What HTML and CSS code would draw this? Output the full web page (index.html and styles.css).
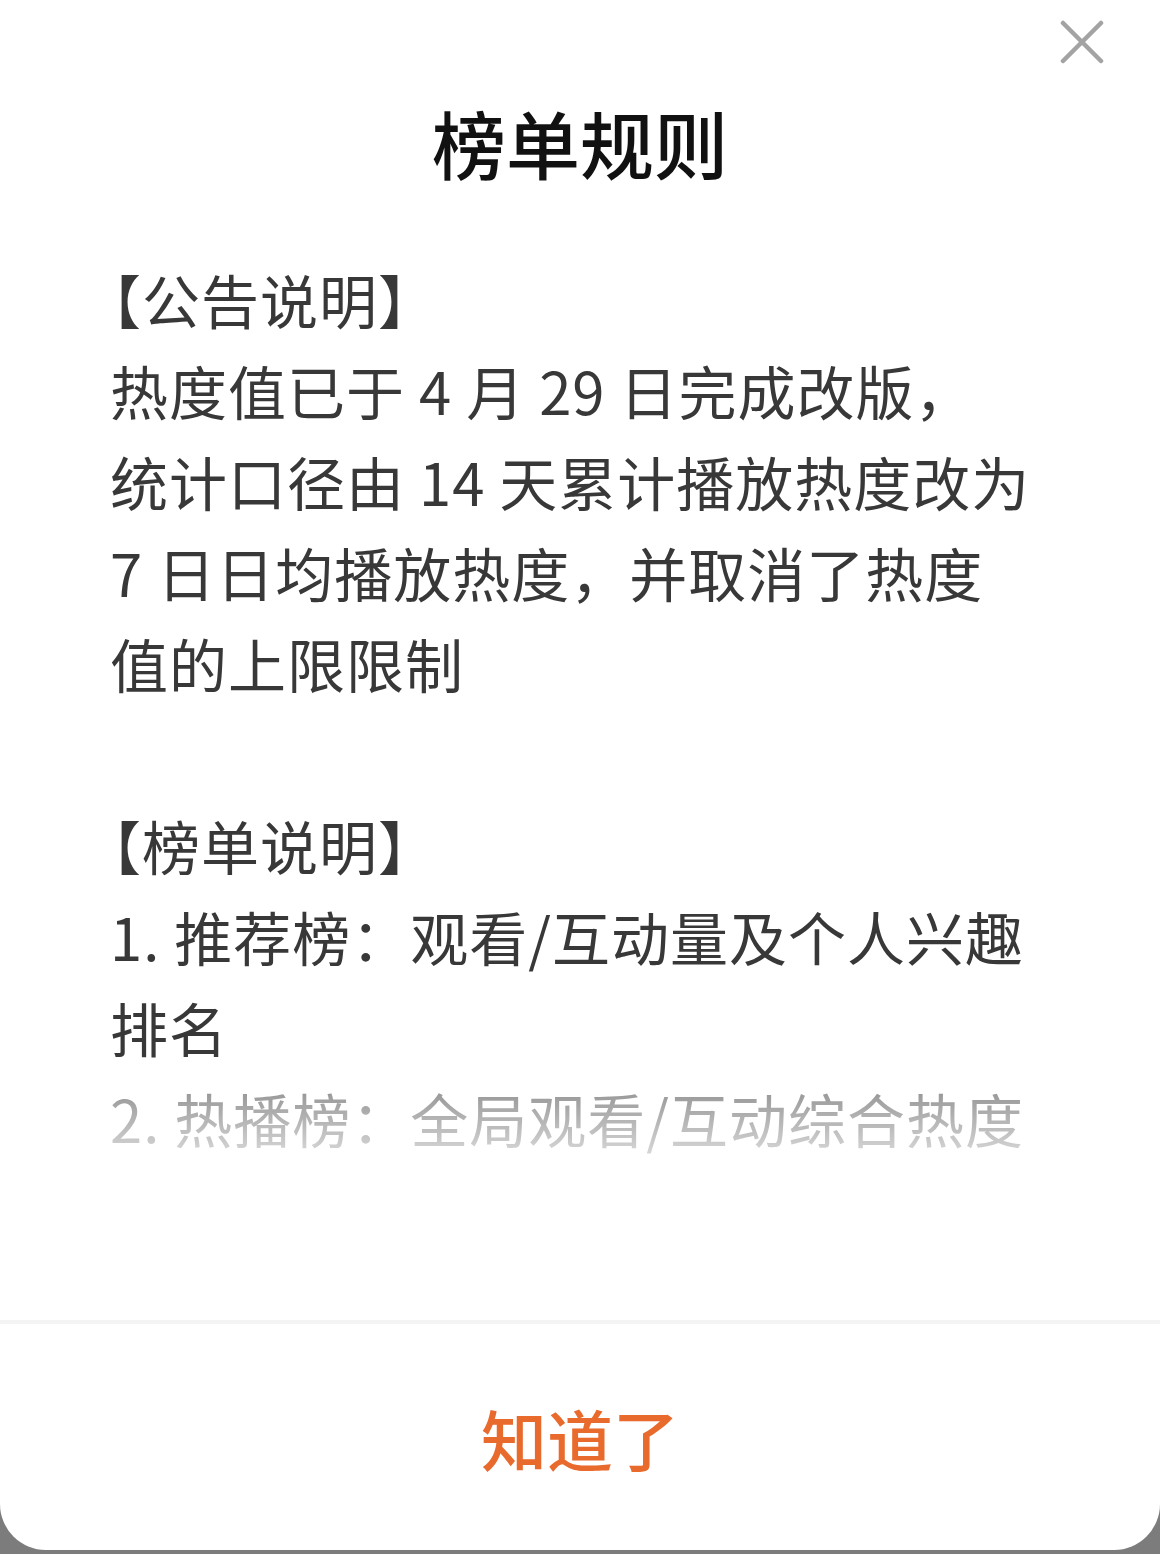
FILE: index.html
```html
<!DOCTYPE html>
<html lang="zh-CN">
<head>
<meta charset="utf-8">
<title>榜单规则</title>
<link rel="stylesheet" href="styles.css">
</head>
<body>
<div class="modal">
  <button class="close" aria-label="关闭">
    <svg viewBox="0 0 44 44" width="44" height="44"><path d="M3 3 L41 41 M41 3 L3 41" stroke="#a3a3a3" stroke-width="4.5" stroke-linecap="round" fill="none"/></svg>
  </button>
  <h1 class="title">榜单规则</h1>
  <div class="content">
    <p class="para"><span class="lead">【公告说明】</span><br>热度值已于 4 月 29 日完成改版，<br>统计口径由 14 天累计播放热度改为<br>7 日日均播放热度，并取消了热度<br>值的上限限制</p>
    <p class="para"><span class="lead">【榜单说明】</span><br>1. 推荐榜：观看/互动量及个人兴趣<br>排名<br>2. 热播榜：全局观看/互动综合热度</p>
  </div>
  <div class="footer">
    <button class="ok">知道了</button>
  </div>
</div>
</body>
</html>
```

FILE: styles.css
```css
html, body {
  margin: 0;
  padding: 0;
}
body {
  width: 1160px;
  height: 1554px;
  background: #7c7c7c;
  font-family: "Noto Sans CJK SC", "Noto Sans", sans-serif;
  overflow: hidden;
}
.modal {
  position: relative;
  width: 1160px;
  height: 1550px;
  background: #ffffff;
  border-radius: 0 0 46px 46px;
  display: flex;
  flex-direction: column;
  overflow: hidden;
}
.close {
  position: absolute;
  top: 20px;
  right: 56px;
  width: 44px;
  height: 44px;
  padding: 0;
  border: 0;
  background: transparent;
}
.close svg {
  display: block;
}
.title {
  margin: 0;
  padding-top: 92px;
  height: 100px;
  line-height: 100px;
  text-align: center;
  font-size: 74px;
  font-weight: 500;
  color: #111111;
}
.content {
  position: relative;
  flex: 1;
  overflow: hidden;
  padding: 62px 0 0 110px;
  font-size: 58px;
  line-height: 91px;
  letter-spacing: 1px;
  color: #383838;
  white-space: nowrap;
}
.content::after {
  content: "";
  position: absolute;
  left: 0;
  right: 0;
  bottom: 0;
  height: 250px;
  background: linear-gradient(to bottom, rgba(255,255,255,0) 0%, rgba(255,255,255,0.5) 10%, rgba(255,255,255,0.8) 34%, #ffffff 55%);
}
.para {
  margin: 0 0 91px 0;
}
.lead {
  margin-left: -27px;
}
.footer {
  height: 226px;
  border-top: 4px solid #f4f4f4;
  display: flex;
  align-items: center;
  justify-content: center;
}
.ok {
  border: 0;
  background: transparent;
  font-family: "Noto Sans CJK SC", "Noto Sans", sans-serif;
  font-size: 66px;
  font-weight: 500;
  color: #e96a2d;
  padding: 0;
  line-height: 1;
}
```
